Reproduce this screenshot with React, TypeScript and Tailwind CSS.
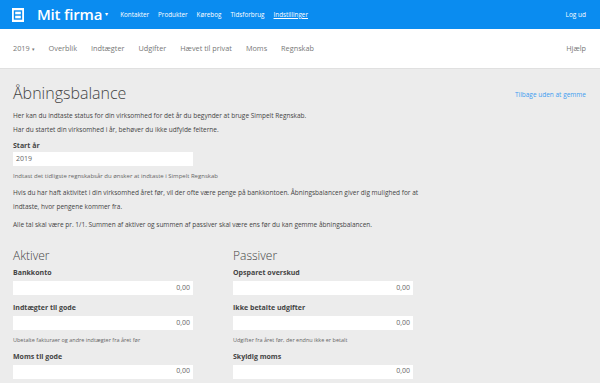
import React from 'react';

const TOP_LINKS = ['Kontakter', 'Produkter', 'Kørebog', 'Tidsforbrug', 'Indstillinger'];
const SUB_LINKS = ['Overblik', 'Indtægter', 'Udgifter', 'Hævet til privat', 'Moms', 'Regnskab'];

interface Field {
  label: string;
  help?: string;
}

const AKTIVER: Field[] = [
  { label: 'Bankkonto' },
  { label: 'Indtægter til gode', help: 'Ubetalte fakturaer og andre indtægter fra året før' },
  { label: 'Moms til gode' },
];

const PASSIVER: Field[] = [
  { label: 'Opsparet overskud' },
  { label: 'Ikke betalte udgifter', help: 'Udgifter fra året før, der endnu ikke er betalt' },
  { label: 'Skyldig moms' },
];

function Logo() {
  return (
    <svg width="12" height="14" viewBox="0 0 12 14">
      <rect x="0" y="0" width="12" height="14" fill="#fff" />
      <rect x="2.5" y="3" width="7" height="8" fill="none" stroke="#0a8cf0" strokeWidth="1.4" />
      <line x1="2.5" y1="7" x2="9.5" y2="7" stroke="#0a8cf0" strokeWidth="1.4" />
    </svg>
  );
}

function Column({ title, fields }: { title: string; fields: Field[] }) {
  return (
    <div className="w-[180px]">
      <h2 className="text-[12px] font-light text-[#444] leading-none mb-[7px]">{title}</h2>
      {fields.map((f) => (
        <div key={f.label} className="mb-[9px]">
          <div className="text-[7px] font-bold text-[#444] leading-none mb-[5px]">{f.label}</div>
          <div className="h-[14px] bg-white flex items-center justify-end px-[3px] text-[7px] text-[#666]">0,00</div>
          {f.help && <div className="text-[5.5px] text-[#666] leading-none mt-[8px] mb-[5px]">{f.help}</div>}
        </div>
      ))}
    </div>
  );
}

export default function App() {
  return (
    <div className="w-[600px] h-[383px] overflow-hidden bg-[#ececec] font-['Open_Sans',sans-serif]">
      <div className="h-[29px] bg-[#0a8cf0] flex items-center px-[12px] text-white">
        <Logo />
        <span className="ml-[13px] text-[15px] font-semibold tracking-[-0.2px]">Mit firma</span>
        <span className="ml-[3px] text-[6px]">▾</span>
        <div className="ml-[12px] flex gap-[9px] text-[6.3px]">
          {TOP_LINKS.map((l, i) => (
            <span key={l} className={i === TOP_LINKS.length - 1 ? 'underline' : ''}>{l}</span>
          ))}
        </div>
        <span className="ml-auto mr-[2px] text-[6.5px]">Log ud</span>
      </div>
      <div className="h-[40px] bg-white border-b border-[#e0e0e0] flex items-center px-[13px] text-[7.3px] text-[#777]">
        <span>2019 <span className="text-[5px]">▾</span></span>
        <div className="ml-[14px] flex gap-[14px]">
          {SUB_LINKS.map((l) => (
            <span key={l}>{l}</span>
          ))}
        </div>
        <span className="ml-auto mr-[1px]">Hjælp</span>
      </div>
      <div className="px-[13px] pt-[16px]">
        <div className="flex items-start justify-between">
          <h1 className="text-[16px] font-light text-[#444] leading-none">Åbningsbalance</h1>
          <a className="mt-[5px] mr-[1px] text-[6.5px] text-[#3d9cf0]">Tilbage uden at gemme</a>
        </div>
        <div className="mt-[8px] text-[6.5px] leading-[14px] text-[#444]">
          <p>Her kan du indtaste status for din virksomhed for det år du begynder at bruge Simpelt Regnskab.</p>
          <p>Har du startet din virksomhed i år, behøver du ikke udfylde felterne.</p>
        </div>
        <div className="mt-[5px] text-[7px] font-bold text-[#444] leading-none">Start år</div>
        <div className="mt-[3px] w-[180px] h-[14px] bg-white flex items-center px-[3px] text-[7px] text-[#666]">2019</div>
        <div className="mt-[7px] text-[6px] text-[#666] leading-none">Indtast det tidligste regnskabsår du ønsker at indtaste i Simpelt Regnskab</div>
        <p className="mt-[7px] text-[6.5px] leading-[14px] text-[#444]">
          Hvis du har haft aktivitet i din virksomhed året før, vil der ofte være penge på bankkontoen. Åbningsbalancen giver dig mulighed for at
          <br />
          indtaste, hvor pengene kommer fra.
        </p>
        <p className="mt-[4px] text-[6.5px] leading-[14px] text-[#444]">
          Alle tal skal være pr. 1/1. Summen af aktiver og summen af passiver skal være ens før du kan gemme åbningsbalancen.
        </p>
        <div className="mt-[18px] flex gap-[40px]">
          <Column title="Aktiver" fields={AKTIVER} />
          <Column title="Passiver" fields={PASSIVER} />
        </div>
      </div>
    </div>
  );
}
